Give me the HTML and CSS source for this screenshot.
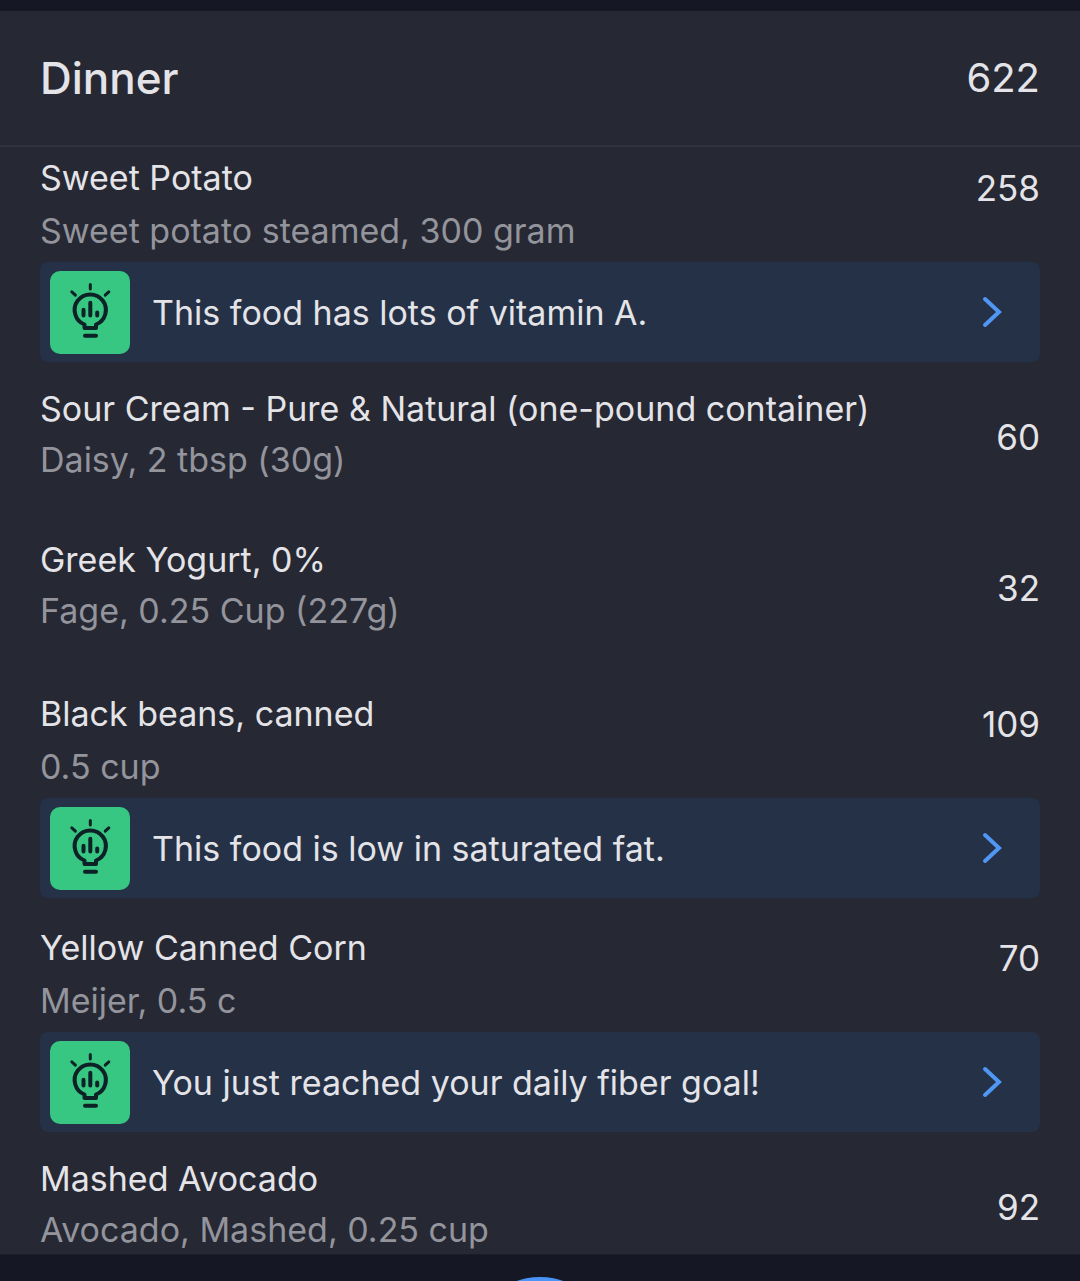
FILE: index.html
```html
<!DOCTYPE html>
<html lang="en">
<head>
    <meta charset="UTF-8">
    <meta name="viewport" content="width=device-width, initial-scale=1.0">
    <title>Food Diary - Dinner</title>
    <link rel="stylesheet" href="styles.css">
</head>
<body>

    <!-- shared icons -->
    <svg class="sprite" aria-hidden="true">
        <symbol id="bulb" viewBox="0 0 80 83">
            <g fill="none" stroke="#0d2226" stroke-width="4" stroke-linecap="round" stroke-linejoin="round">
                <path d="M34.5 53.5A15.6 15.6 0 1 1 46 53.5V57H34.5Z"/>
                <path d="M35 64.7H46"/>
                <path d="M33.5 38.7V44.6M40.3 31.8V44.6M47.2 41.6V44.6"/>
                <path stroke-width="3" d="M40.3 13.5V18M21.8 20.8L25.4 24.2M58.8 20.8L55.2 24.2"/>
            </g>
        </symbol>
        <symbol id="chevron" viewBox="0 0 20 32">
            <path d="M3 3L17 16L3 29" fill="none" stroke="#4f97f5" stroke-width="4" stroke-linecap="round"/>
        </symbol>
    </svg>

    <main class="meal">
        <header class="meal-header">
            <h1>Dinner</h1>
            <span class="total">622</span>
        </header>

        <ul class="foods">
            <li class="food food-tip food-first">
                <div class="row">
                    <div class="info">
                        <h2>Sweet Potato</h2>
                        <p>Sweet potato steamed, 300 gram</p>
                    </div>
                    <span class="calories">258</span>
                </div>
                <button class="tip" type="button">
                    <svg class="tip-icon"><use href="#bulb"/></svg>
                    <span class="tip-text">This food has lots of vitamin A.</span>
                    <svg class="tip-arrow"><use href="#chevron"/></svg>
                </button>
            </li>

            <li class="food">
                <div class="row">
                    <div class="info">
                        <h2>Sour Cream - Pure &amp; Natural (one-pound container)</h2>
                        <p>Daisy, 2 tbsp (30g)</p>
                    </div>
                    <span class="calories">60</span>
                </div>
            </li>

            <li class="food">
                <div class="row">
                    <div class="info">
                        <h2>Greek Yogurt, 0%</h2>
                        <p>Fage, 0.25 Cup (227g)</p>
                    </div>
                    <span class="calories">32</span>
                </div>
            </li>

            <li class="food food-tip">
                <div class="row">
                    <div class="info">
                        <h2>Black beans, canned</h2>
                        <p>0.5 cup</p>
                    </div>
                    <span class="calories">109</span>
                </div>
                <button class="tip" type="button">
                    <svg class="tip-icon"><use href="#bulb"/></svg>
                    <span class="tip-text">This food is low in saturated fat.</span>
                    <svg class="tip-arrow"><use href="#chevron"/></svg>
                </button>
            </li>

            <li class="food food-tip">
                <div class="row">
                    <div class="info">
                        <h2>Yellow Canned Corn</h2>
                        <p>Meijer, 0.5 c</p>
                    </div>
                    <span class="calories">70</span>
                </div>
                <button class="tip" type="button">
                    <svg class="tip-icon"><use href="#bulb"/></svg>
                    <span class="tip-text">You just reached your daily fiber goal!</span>
                    <svg class="tip-arrow"><use href="#chevron"/></svg>
                </button>
            </li>

            <li class="food">
                <div class="row">
                    <div class="info">
                        <h2>Mashed Avocado</h2>
                        <p>Avocado, Mashed, 0.25 cup</p>
                    </div>
                    <span class="calories">92</span>
                </div>
            </li>
        </ul>
    </main>

    <nav class="tab-bar">
        <button class="add-button" type="button" aria-label="Add food"></button>
    </nav>

</body>
</html>
```

FILE: styles.css
```css
* {
    box-sizing: border-box;
}

body {
    font-family: Inter, "Liberation Sans", sans-serif;
    background-color: #151724;
    color: #e4e4e8;
    margin: 0;
    padding-top: 11px;
    display: flex;
    flex-direction: column;
    height: 100vh;
    overflow: hidden;
}

h1, h2, p, ul {
    margin: 0;
    padding: 0;
}

.sprite {
    display: none;
}

.meal {
    flex: 1;
    min-height: 0;
    overflow: hidden;
    background-color: #262833;
}

.meal-header {
    display: flex;
    justify-content: space-between;
    align-items: center;
    padding: 40px;
    border-bottom: 2px solid #30323e;
}

h1 {
    font-size: 44px;
    font-weight: 500;
    line-height: 54px;
}

.total {
    font-size: 40px;
    line-height: 54px;
}

.foods {
    list-style: none;
}

.food {
    padding: 21px 40px 28px;
}

.row {
    display: flex;
    justify-content: space-between;
    align-items: flex-start;
}

h2, .info p {
    font-size: 34px;
    font-weight: 400;
    line-height: 51px;
}

.info p {
    color: #93949c;
}

.calories {
    padding-top: 29px;
    font-size: 35px;
    line-height: 51px;
}

/* foods with an insight below them */
.food-tip {
    padding: 23px 40px 0;
}

.food-first {
    padding-top: 4px;
}

.food-tip .row {
    margin-bottom: 5px;
}

.food-tip h2, .food-tip p {
    line-height: 53px;
}

.food-tip .calories {
    padding-top: 12px;
}

.tip {
    display: flex;
    align-items: center;
    width: 100%;
    height: 100px;
    padding: 0 38px 0 10px;
    border: none;
    border-radius: 8px;
    background-color: #243147;
    color: #e4e4e8;
    font-family: inherit;
    font-size: 34px;
    text-align: left;
    cursor: pointer;
}

.tip-icon {
    width: 80px;
    height: 83px;
    border-radius: 10px;
    background-color: #38c782;
}

.tip-text {
    flex: 1;
    margin-left: 22px;
}

.tip-arrow {
    width: 20px;
    height: 32px;
}

.tab-bar {
    flex: none;
    height: 27px;
    padding-top: 22px;
    display: flex;
    justify-content: center;
    align-items: flex-start;
    overflow: hidden;
    border-top: 1px solid #1b1d29;
}

.add-button {
    flex: none;
    width: 140px;
    height: 140px;
    padding: 0;
    border: none;
    border-radius: 50%;
    background-color: #4a94f8;
    cursor: pointer;
}
```
